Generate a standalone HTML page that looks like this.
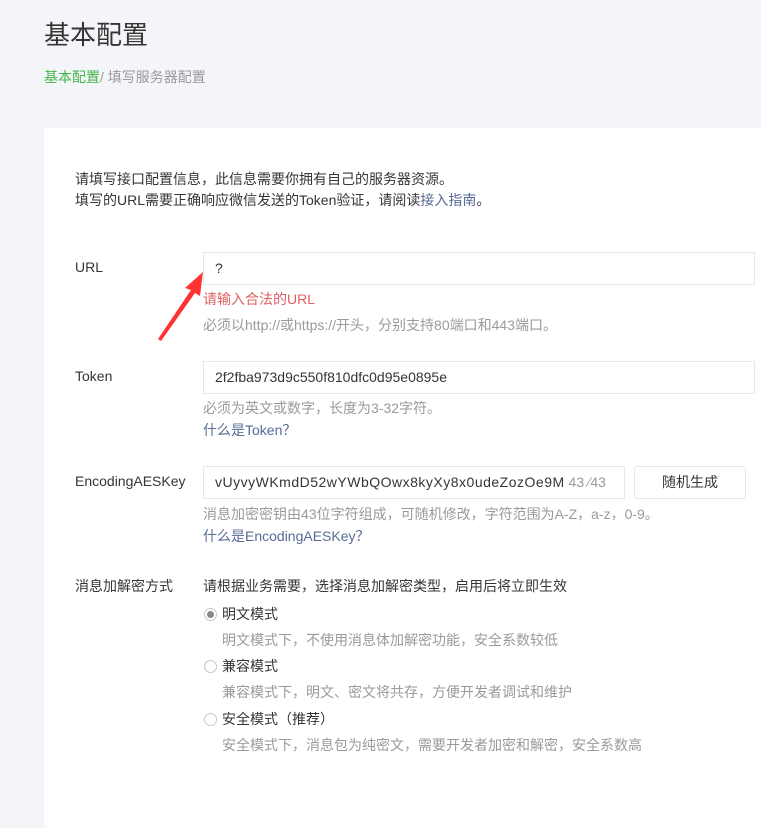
<!DOCTYPE html>
<html><head><meta charset="utf-8"><style>
body{margin:0;width:761px;height:783px;background:#f4f5f9;font-family:"Liberation Sans","Noto Sans CJK SC",sans-serif;font-size:14px;color:#353535;position:relative;overflow:hidden}
.a{position:absolute;white-space:nowrap;line-height:20px}
.card{position:absolute;left:44px;top:128px;width:740px;height:700px;background:#fff;border-radius:4px}
.in{position:absolute;border:1px solid #e4e8eb;background:#fff;box-sizing:border-box;height:33px;line-height:31px;padding-left:11px;font-size:14px;color:#353535}
.g{color:#9a9a9a}.l{color:#576b95}
.r{position:absolute;width:13px;height:13px;border:1px solid #c8c8c8;border-radius:50%;box-sizing:border-box;background:#fff}
</style></head><body>
<div class="a" style="left:44px;top:18px;font-size:26px;line-height:34px;color:#353535">基本配置</div>
<div class="a" style="left:44px;top:67px;color:#999"><span style="color:#44b549">基本配置</span>/ 填写服务器配置</div>
<div class="card"></div>
<div class="a" style="left:75px;top:169px">请填写接口配置信息，此信息需要你拥有自己的服务器资源。</div>
<div class="a" style="left:75px;top:190px">填写的URL需要正确响应微信发送的Token验证，请阅读<span class="l">接入指南</span>。</div>

<div class="a" style="left:75px;top:257px">URL</div>
<div class="in" style="left:203px;top:252px;width:552px">?</div>
<div class="a" style="left:203px;top:289px;color:#e15f63">请输入合法的URL</div>
<div class="a g" style="left:203px;top:315px">必须以http://或https://开头，分别支持80端口和443端口。</div>
<svg style="position:absolute;left:155px;top:270px" width="55" height="72"><polygon points="48,2 30,18 36,20 3,69 6,71 40,23 45,26" fill="#f33"/></svg>

<div class="a" style="left:75px;top:366px">Token</div>
<div class="in" style="left:203px;top:361px;width:552px">2f2fba973d9c550f810dfc0d95e0895e</div>
<div class="a g" style="left:203px;top:398px">必须为英文或数字，长度为3-32字符。</div>
<div class="a l" style="left:203px;top:420px">什么是Token？</div>

<div class="a" style="left:75px;top:471px">EncodingAESKey</div>
<div class="in" style="left:203px;top:466px;width:422px"><span style="letter-spacing:0.5px">vUyvyWKmdD52wYWbQOwx8kyXy8x0udeZozOe9M</span><span class="g"> 43 ∕43</span></div>
<div class="in" style="left:634px;top:466px;width:112px;padding:0;text-align:center;border-radius:3px">随机生成</div>
<div class="a g" style="left:203px;top:504px">消息加密密钥由43位字符组成，可随机修改，字符范围为A-Z，a-z，0-9。</div>
<div class="a l" style="left:203px;top:526px">什么是EncodingAESKey？</div>

<div class="a" style="left:75px;top:576px">消息加解密方式</div>
<div class="a" style="left:203px;top:576px">请根据业务需要，选择消息加解密类型，启用后将立即生效</div>
<div class="r" style="left:204px;top:608px"><div style="width:7px;height:7px;border-radius:50%;background:#888;margin:2px"></div></div>
<div class="a" style="left:222px;top:604px">明文模式</div>
<div class="a g" style="left:222px;top:630px">明文模式下，不使用消息体加解密功能，安全系数较低</div>
<div class="r" style="left:204px;top:660px"></div>
<div class="a" style="left:222px;top:656px">兼容模式</div>
<div class="a g" style="left:222px;top:682px">兼容模式下，明文、密文将共存，方便开发者调试和维护</div>
<div class="r" style="left:204px;top:713px"></div>
<div class="a" style="left:222px;top:709px">安全模式（推荐）</div>
<div class="a g" style="left:222px;top:735px">安全模式下，消息包为纯密文，需要开发者加密和解密，安全系数高</div>
</body></html>
